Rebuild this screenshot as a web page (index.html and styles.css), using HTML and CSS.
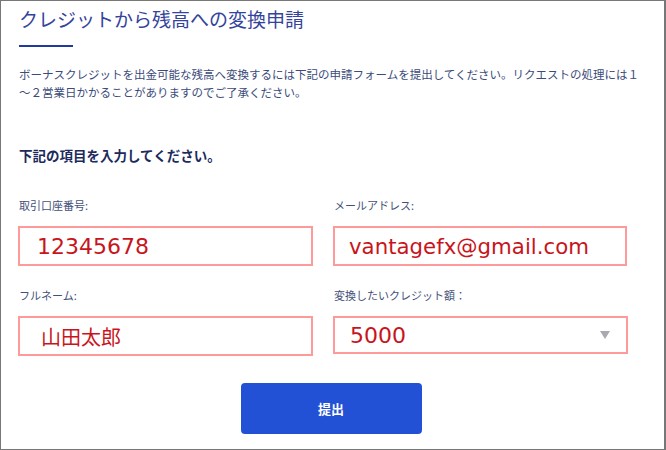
FILE: index.html
```html
<!DOCTYPE html>
<html lang="ja">
<head>
    <meta charset="UTF-8">
    <meta name="viewport" content="width=device-width, initial-scale=1.0">
    <title>クレジットから残高への変換申請</title>
    <link rel="stylesheet" href="styles.css">
</head>
<body>

    <div class="panel">
        <h1>クレジットから残高への変換申請</h1>
        <div class="rule"></div>

        <p class="intro">ボーナスクレジットを出金可能な残高へ変換するには下記の申請フォームを提出してください。リクエストの処理には１～２営業日かかることがありますのでご了承ください。</p>

        <!-- 申請フォーム -->
        <form id="formCredit">
            <h2>下記の項目を入力してください。</h2>

            <div class="grid">
                <div class="field">
                    <label for="cuenta">取引口座番号:</label>
                    <input type="text" id="cuenta" value="12345678" readonly>
                </div>
                <div class="field">
                    <label for="email">メールアドレス:</label>
                    <input type="text" id="email" class="email" value="vantagefx@gmail.com" readonly>
                </div>
                <div class="field">
                    <label for="nombre">フルネーム:</label>
                    <input type="text" id="nombre" class="name" value="山田太郎" readonly>
                </div>
                <div class="field">
                    <label>変換したいクレジット額：</label>
                    <div class="select">
                        <span>5000</span>
                        <span class="arrow"></span>
                    </div>
                </div>
            </div>

            <div class="actions">
                <button type="button">提出</button>
            </div>
        </form>
    </div>

</body>
</html>
```

FILE: styles.css
```css
body {
    margin: 0;
    padding: 0;
    background-color: #fff;
    font-family: "Noto Sans CJK JP", "Noto Sans", sans-serif;
}

.panel {
    box-sizing: border-box;
    width: 666px;
    height: 450px;
    border: 1px solid #777;
    border-right-width: 2px;
    padding: 4px 38px 0 17px;
    overflow: hidden;
}

h1 {
    margin: 0;
    padding-left: 1px;
    font-size: 19px;
    font-weight: 400;
    line-height: 28px;
    color: #34449c;
}

.rule {
    width: 54px;
    height: 2px;
    margin: 12px 0 0 1px;
    background-color: #1f3c9c;
}

.intro {
    margin: 18px -24px 0 1px;
    font-size: 11.5px;
    line-height: 18px;
    color: #3b4b7a;
}

h2 {
    margin: 44px 0 0 1px;
    font-size: 13.5px;
    font-weight: 700;
    line-height: 20px;
    color: #1c2a5c;
}

.grid {
    display: grid;
    grid-template-columns: 295px 294px;
    column-gap: 20px;
    row-gap: 20px;
    margin-top: 31px;
}

.field label {
    display: block;
    margin-left: 1px;
    font-size: 11px;
    line-height: 18px;
    color: #43517a;
}

input, .select {
    box-sizing: border-box;
    display: flex;
    align-items: center;
    width: 100%;
    height: 40px;
    margin-top: 12px;
    padding: 0 0 0 17px;
    border: 2px solid #ff9a9a;
    background: #fff;
    font-family: "DejaVu Sans", "Noto Sans CJK JP", sans-serif;
    font-size: 22px;
    color: #c8141c;
    outline: none;
}

input.email {
    padding-left: 14px;
    font-size: 21.3px;
}

input.name {
    padding-left: 21px;
    font-family: "Noto Sans CJK JP", sans-serif;
    font-size: 20px;
}

.select {
    justify-content: space-between;
    height: 38px;
    margin-top: 12px;
    padding-left: 15px;
    padding-right: 16px;
    width: 295px;
}

.arrow {
    width: 0;
    height: 0;
    border-left: 5px solid transparent;
    border-right: 5px solid transparent;
    border-top: 8px solid #a9a9ae;
}

.actions {
    display: flex;
    justify-content: center;
    padding-left: 18px;
    margin-top: 27px;
}

button {
    width: 181px;
    height: 51px;
    border: none;
    border-radius: 4px;
    background-color: #2351d6;
    color: #fff;
    font-family: "Noto Sans CJK JP", sans-serif;
    font-size: 13px;
    font-weight: 700;
    cursor: pointer;
}
```
